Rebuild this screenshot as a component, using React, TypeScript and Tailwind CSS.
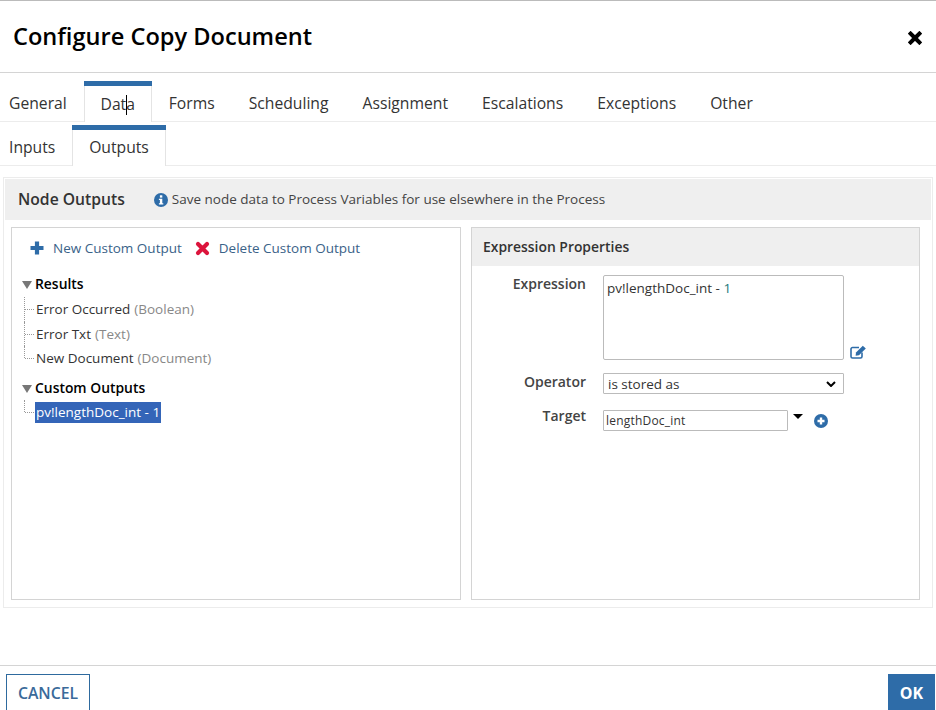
const topTabs = ["General", "Data", "Forms", "Scheduling", "Assignment", "Escalations", "Exceptions", "Other"];

const results = [
  { name: "Error Occurred", type: "(Boolean)" },
  { name: "Error Txt", type: "(Text)" },
  { name: "New Document", type: "(Document)" },
];

const TreeCaret = () => (
  <span className="w-0 h-0 border-x-[5px] border-x-transparent border-t-[8px] border-t-[#777] mr-[3px] mt-px" />
);

const TreeLeaf = ({ children, last }: { children: React.ReactNode; last?: boolean }) => (
  <div className="relative h-[24.5px] pl-[35px] flex items-center">
    <span className={`absolute left-[23px] top-0 border-l border-dotted border-[#999] ${last ? "h-[12px]" : "h-full"}`} />
    <span className="absolute left-[24px] top-[12px] w-[9px] border-t border-dotted border-[#999]" />
    {children}
  </div>
);

const App = () => {
  return (
    <div className="h-[710px] w-[936px] overflow-hidden bg-white flex flex-col text-[#333] font-['Open_Sans',sans-serif] border-t border-[#bbb]">
      {/* header */}
      <div className="h-[72px] shrink-0 border-b border-[#d4d4d4] flex items-center justify-between pl-[13px] pr-[14px]">
        <h1 className="text-[23.6px] font-semibold text-black leading-none">Configure Copy Document</h1>
        <svg width="14" height="14" viewBox="0 0 14 14" className="mt-[2px]">
          <path d="M2.6 0.6 7 5 11.4 0.6 13.4 2.6 9 7 13.4 11.4 11.4 13.4 7 9 2.6 13.4 0.6 11.4 5 7 0.6 2.6Z" fill="#000" stroke="#000" strokeWidth="1.2" strokeLinejoin="round" />
        </svg>
      </div>

      {/* tabs */}
      <div className="h-[49px] shrink-0 border-b border-[#ececec] flex items-end pl-[9px] pt-[8px]">
        {topTabs.map((tab) =>
          tab === "Data" ? (
            <div key={tab} className="relative h-[41px] w-[68px] ml-[17px] mr-[17px] -mb-px bg-white border-t-[5px] border-[#2e6ca8] flex justify-center pt-[7px] text-[15.7px]">
              <span className="absolute inset-y-0 left-0 border-l border-[#e4e4e4]" />
              <span className="absolute inset-y-0 right-0 border-l border-[#e4e4e4]" />
              <span className="relative">
                Data
                <span className="absolute left-[25px] top-[2px] h-[20px] border-l border-black" />
              </span>
            </div>
          ) : (
            <div key={tab} className={`h-[41px] pt-[12px] text-[15.7px] ${tab === "General" ? "" : "mr-[34px]"}`}>
              {tab}
            </div>
          ),
        )}
      </div>
      <div className="h-[44px] shrink-0 border-b border-[#ececec] flex items-end pl-[9px]">
        <div className="w-[47px] h-[41px] pt-[12px] text-[15.7px]">Inputs</div>
        <div className="relative h-[41px] w-[94px] ml-[16px] -mb-px bg-white border-t-[5px] border-[#2e6ca8] text-[15.7px] flex justify-center pt-[6px]">
          <span className="absolute inset-y-0 left-0 border-l border-[#e4e4e4]" />
          <span className="absolute inset-y-0 right-0 border-l border-[#e4e4e4]" />
          Outputs
        </div>
      </div>

      {/* node outputs */}
      <div className="mt-[11px] ml-[3px] mr-[3px] h-[431px] shrink-0 border border-[#ececec] p-px">
        <div className="h-[41px] bg-[#efefef] flex items-center pl-[13px]">
          <span className="text-[15.7px] font-semibold">Node Outputs</span>
          <svg width="14" height="14" viewBox="0 0 14 14" className="ml-[29px]">
            <circle cx="7" cy="7" r="7" fill="#2e6ca8" />
            <rect x="5.9" y="2.3" width="2.4" height="2.3" fill="#fff" />
            <path d="M4.9 5.7H8.3V10.2H9.3V11.6H4.9V10.2H5.9V7.1H4.9Z" fill="#fff" />
          </svg>
          <span className="ml-[4px] text-[13.5px] text-[#444]">Save node data to Process Variables for use elsewhere in the Process</span>
        </div>

        <div className="flex mt-[7px] ml-[6px]">
          {/* left tree */}
          <div className="w-[450px] h-[373px] border border-[#d4d4d4] text-[13.5px]">
            <div className="flex items-center h-[20px] mt-[10px] pl-[18px] text-[#3a6288]">
              <svg width="14" height="14" viewBox="0 0 14 14">
                <path d="M7 0.5V13.500M0.500 7H13.500" stroke="#2e6ca8" strokeWidth="4.200" />
              </svg>
              <span className="ml-[9px]">New Custom Output</span>
              <svg width="15" height="15" viewBox="0 0 15 15" className="ml-[13px]">
                <path d="M3 3 12 12M12 3 3 12" stroke="#dc143c" strokeWidth="4.200" strokeLinecap="round" />
              </svg>
              <span className="ml-[9px]">Delete Custom Output</span>
            </div>

            <div className="mt-[16px] pl-[10px] flex items-center h-[20px] font-semibold text-[13.9px] text-black">
              <TreeCaret />
              Results
            </div>
            <div className="-ml-[11px] mt-[3.25px]">
              {results.map((item, idx) => (
                <TreeLeaf key={item.name} last={idx === results.length - 1}>
                  <span>{item.name}</span>
                  <span className="ml-[4px] text-[#888]">{item.type}</span>
                </TreeLeaf>
              ))}
            </div>
            <div className="mt-[8px] pl-[10px] flex items-center h-[20px] font-semibold text-[13.9px] text-black">
              <TreeCaret />
              Custom Outputs
            </div>
            <div className="-ml-[11px] mt-[1px]">
              <TreeLeaf last>
                <span className="bg-[#3465b8] text-white h-[21px] leading-[20px] px-px -ml-px">pv!lengthDoc_int - 1</span>
              </TreeLeaf>
            </div>
          </div>

          {/* right properties */}
          <div className="ml-[10px] w-[449px] h-[373px] border border-[#d4d4d4] text-[14px]">
            <div className="h-[38px] bg-[#efefef] flex items-center pl-[11px] font-semibold text-[13.9px]">Expression Properties</div>

            <div className="flex mt-[9px]">
              <label className="w-[114px] text-right font-semibold text-[#444] -mt-[2px]">Expression</label>
              <div className="ml-[17px] w-[241px] h-[85px] border border-[#bbb] rounded-[2px] pl-[3px] pt-[1px] leading-[22px] text-[13.5px]">
                pv!lengthDoc_int - <span className="text-[#1f7a7a]">1</span>
              </div>
              <svg width="17" height="14" viewBox="0 0 17 14" className="ml-[6px] mt-[70px]" fill="none">
                <path d="M12 7.5V11.5C12 12.3 11.3 13 10.5 13H2.5C1.7 13 1 12.3 1 11.5V4C1 3.200 1.700 2.500 2.500 2.500H9" stroke="#2e6ca8" strokeWidth="1.6" />
                <path d="M6 7.500 12.800 0.800 15.800 3.600 9 10.300 5.600 10.800Z" fill="#2e6ca8" />
              </svg>
            </div>

            <div className="flex items-center mt-[13px]">
              <label className="w-[114px] text-right font-semibold text-[#444] -mt-[5px]">Operator</label>
              <div className="ml-[17px] w-[241px] h-[21px] border border-[#bbb] flex items-center justify-between pl-[4px] pr-[7px] rounded-[1px] text-[13.5px]">
                <span className="pt-[2px]">is stored as</span>
                <svg width="10" height="6" viewBox="0 0 10 6" fill="none">
                  <path d="M1 1 5 5 9 1" stroke="#000" strokeWidth="2" />
                </svg>
              </div>
            </div>

            <div className="flex items-center mt-[16px]">
              <label className="w-[114px] text-right font-semibold text-[#444] -mt-[11px]">Target</label>
              <div className="ml-[17px] w-[185px] h-[21px] border border-[#bbb] rounded-[1px] pl-[2px] text-[12px] leading-[20px] tracking-[0.2px]">
                lengthDoc_int
              </div>
              <span className="ml-[5px] -mt-[9px] w-0 h-0 border-x-[5px] border-x-transparent border-t-[5px] border-t-black" />
              <svg width="14" height="14" viewBox="0 0 14 14" className="ml-[11px]">
                <circle cx="7" cy="7" r="7" fill="#2e6ca8" />
                <path d="M7 3.500V10.500M3.500 7H10.500" stroke="#fff" strokeWidth="2.400" />
              </svg>
            </div>
          </div>
        </div>
      </div>

      {/* footer */}
      <div className="mt-[57px] flex-1 border-t border-[#d4d4d4] pt-[8px] flex justify-between pl-[6px] pr-px">
        <button className="w-[84px] h-[48px] border border-[#2e6a9e] bg-white text-[#3a6a9a] text-[15.8px] font-semibold flex justify-center pt-[7px]">
          CANCEL
        </button>
        <button className="w-[47px] h-[48px] bg-[#2e6ca8] text-white text-[16px] font-bold flex justify-center pt-[7px]">
          OK
        </button>
      </div>
    </div>
  );
};

export default App;
